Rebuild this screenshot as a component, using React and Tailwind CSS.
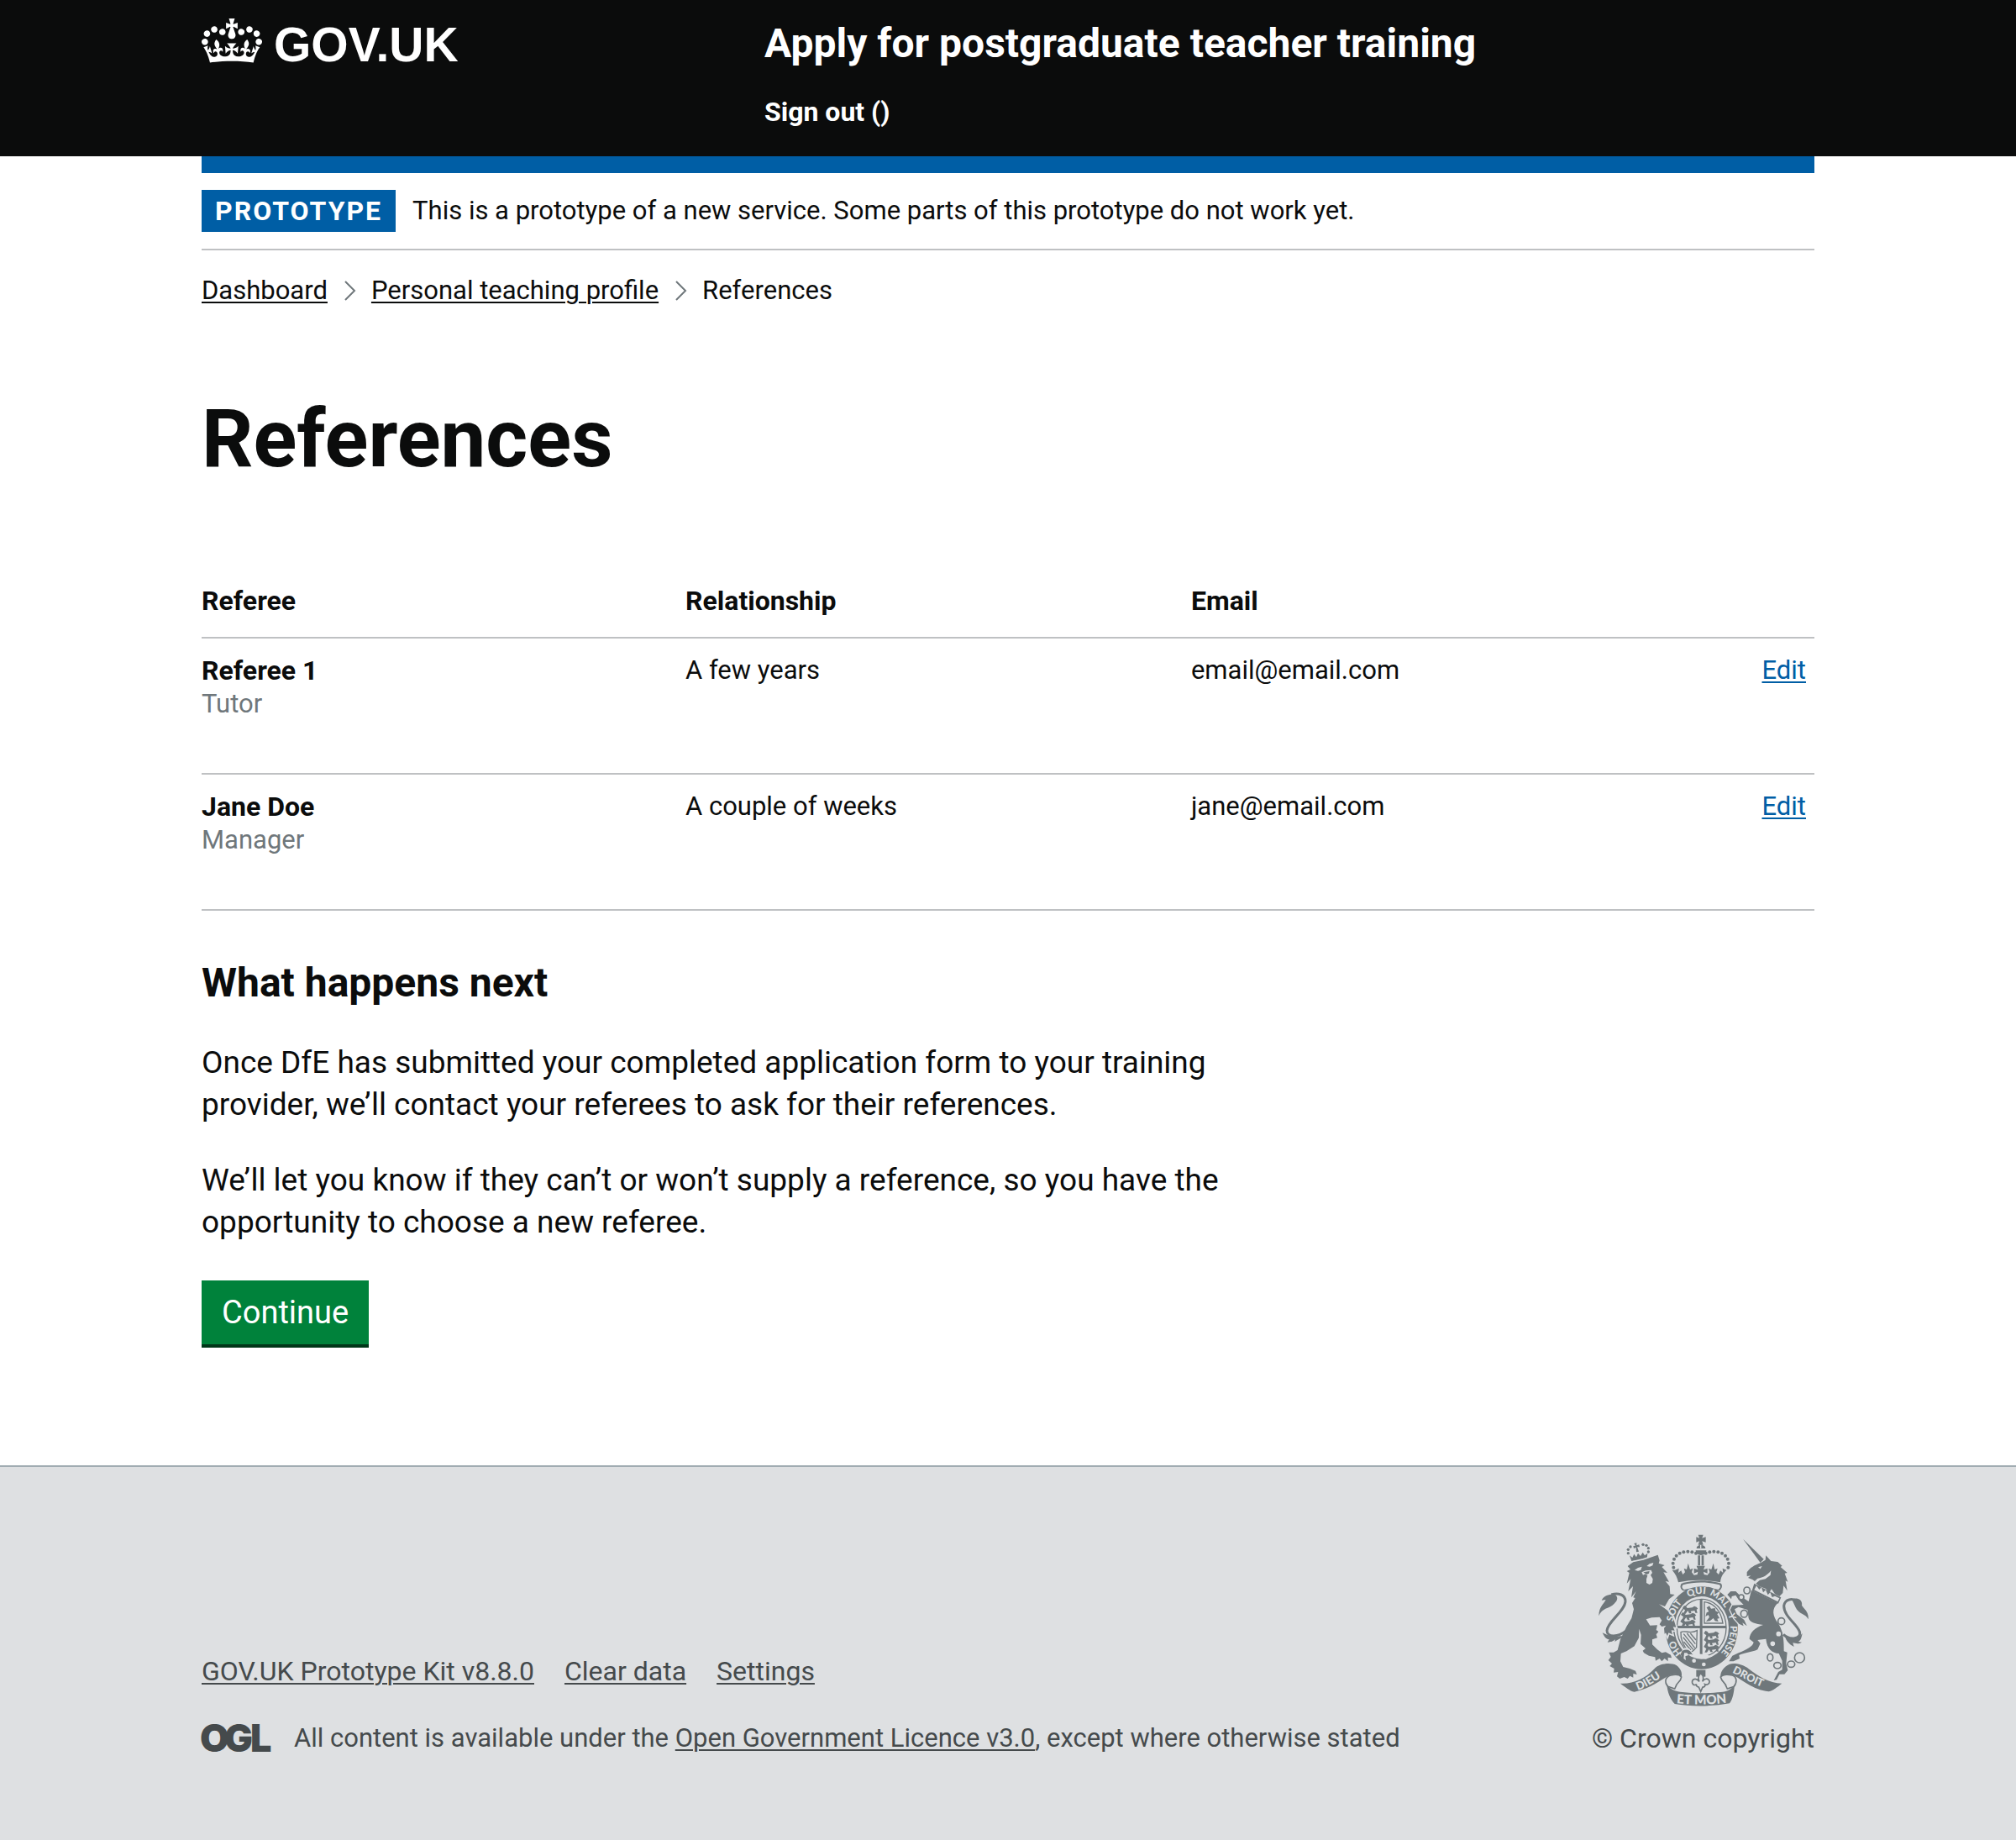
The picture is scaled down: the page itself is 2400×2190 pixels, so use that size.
import React from "react";

const INK = "#6f777b";
const PAPER = "#dee0e2";

function GovCrown() {
  return (
    <svg viewBox="0 0 132 97" className="h-[53px] w-[72px] shrink-0" fill="currentColor" aria-hidden="true">
      <path
        fillRule="evenodd"
        d="M25 30.2c3.5 1.5 7.7-.2 9.1-3.7 1.5-3.6-.2-7.8-3.9-9.2-3.6-1.4-7.6.3-9.1 3.9-1.4 3.5.3 7.5 3.9 9zM9 39.5c3.6 1.5 7.8-.2 9.2-3.7 1.5-3.6-.2-7.8-3.9-9.1-3.6-1.5-7.6.2-9.1 3.8-1.4 3.5.3 7.5 3.8 9zM4.4 57.2c3.5 1.5 7.7-.2 9.1-3.8 1.5-3.6-.2-7.7-3.9-9.1-3.5-1.5-7.6.3-9.1 3.8-1.4 3.5.3 7.6 3.9 9.1zm38.3-21.4c3.5 1.5 7.7-.2 9.1-3.8 1.5-3.6-.2-7.7-3.9-9.1-3.6-1.5-7.6.3-9.1 3.8-1.3 3.6.4 7.7 3.9 9.1zm64.4-5.6c-3.6 1.5-7.8-.2-9.1-3.7-1.5-3.6.2-7.8 3.8-9.2 3.6-1.4 7.7.3 9.2 3.9 1.3 3.5-.4 7.5-3.9 9zm15.9 9.3c-3.6 1.5-7.7-.2-9.1-3.7-1.5-3.6.2-7.8 3.7-9.1 3.6-1.5 7.7.2 9.2 3.8 1.5 3.5-.3 7.5-3.8 9zm4.7 17.7c-3.6 1.5-7.8-.2-9.2-3.8-1.5-3.6.2-7.7 3.9-9.1 3.6-1.5 7.7.3 9.2 3.8 1.3 3.5-.4 7.6-3.9 9.1zM89.3 35.8c-3.6 1.5-7.8-.2-9.2-3.8-1.4-3.6.2-7.7 3.9-9.1 3.6-1.5 7.7.3 9.2 3.8 1.4 3.6-.3 7.7-3.9 9.1zM69.7 17.7l8.9 4.7V9.3l-8.9 2.8c-.2-.3-.5-.6-.9-.9L72.4 0H59.6l3.5 11.2c-.3.3-.6.5-.9.9l-8.8-2.8v13.1l8.8-4.7c.3.3.6.7.9.9l-5 15.4v.1c-.2.8-.4 1.6-.4 2.4 0 4.1 3.1 7.5 7 8.1h.2c.3 0 .7.1 1 .1.4 0 .7 0 1-.1h.2c4-.6 7.1-4.1 7.1-8.1 0-.8-.1-1.7-.4-2.4V34l-5.1-15.4c.4-.2.7-.6 1-.9zM66 92.8c16.9 0 32.8 1.1 47.1 3.2 4-16.9 8.9-26.7 14-33.5l-9.6-3.4c1 4.9 1.1 7.2 0 10.2-1.5-1.4-3-4.3-4.2-8.7L108.6 76c2.8-2 5-3.2 7.5-3.3-4.4 9.4-10 11.9-13.6 11.2-4.3-.8-6.3-4.6-5.6-7.9 1-4.7 5.7-5.9 8-.5 4.3-8.7-3-11.4-7.6-8.8 7.1-7.2 7.9-13.5 2.1-21.1-8 6.1-8.1 12.3-4.5 20.8-4.7-5.4-12.1-2.5-9.5 6.2 3.4-5.2 7.9-2 7.2 3.1-.6 4.3-6.4 7.8-13.5 7.2-10.3-.9-10.9-8-11.2-13.8 2.5-.5 7.1 1.8 11 7.3L80.2 60c-4.1 4.4-8 5.3-12.3 5.4 1.4-4.4 8-11.6 8-11.6H55.5s6.4 7.2 7.9 11.6c-4.2-.1-8-1-12.3-5.4l1.4 16.4c3.9-5.5 8.5-7.7 10.9-7.3-.3 5.8-.9 12.8-11.1 13.8-7.2.6-12.9-2.9-13.5-7.2-.7-5 3.8-8.3 7.1-3.1 2.7-8.7-4.6-11.6-9.4-6.2 3.7-8.5 3.6-14.7-4.6-20.8-5.8 7.6-5 13.9 2.2 21.1-4.7-2.6-11.9.1-7.7 8.8 2.3-5.5 7.1-4.2 8.1.5.7 3.3-1.3 7.1-5.7 7.9-3.5.7-9-1.8-13.5-11.2 2.5.1 4.7 1.3 7.5 3.3l-4.7-15.4c-1.2 4.4-2.7 7.2-4.3 8.7-1.1-3-.9-5.3 0-10.2l-9.5 3.4c5 6.9 9.9 16.7 14 33.5 14.8-2.1 30.8-3.2 47.7-3.2z"
      />
    </svg>
  );
}

function OglLogo() {
  return (
    <svg viewBox="0 0 82 34" className="h-[34px] w-[82px] shrink-0 overflow-visible" role="img" aria-label="Open Government Licence" fill="currentColor">
      <text x="-2 27 58" y="33" fontFamily="Inter, sans-serif" fontWeight="900" fontSize="45">
        OGL
      </text>
    </svg>
  );
}

const crownDots = [
  [420, 144], [406, 140], [391, 138], [376, 140], [362, 144], [350, 153], [342, 165], [338, 180], [340, 195],
];

const lionCrownDots = [
  [178, 144], [178, 131], [186, 121], [231, 113], [243, 116], [250, 126], [250, 139],
];

function Passant({ x, y }) {
  return <path d={`M${x} ${y}l6-9 7 3 4 6 18-2 7-5 8 3 5 6-5 3 3 12h-7l-3-8-14 2 3 8h-8l-5-10-8 11h-8l6-13z`} />;
}

function RoyalArms() {
  return (
    <svg viewBox="72 76 750 615" className="h-[205px] w-[250px]" fill={INK} role="img" aria-label="Royal coat of arms">
      <defs>
        <path id="garter" d="M440 531A103 121 0 0 1 440 289A103 121 0 0 1 440 531" />
        <path id="dieu" d="M212 633C250 622 280 596 330 566" />
        <path id="droit" d="M549 570C590 588 630 618 690 632" />
        <path id="etmon" d="M350 680Q438 688 530 678" />
      </defs>

      {/* garter */}
      <ellipse cx="440" cy="410" rx="130" ry="148" />
      <ellipse cx="440" cy="410" rx="97" ry="112" fill={PAPER} />

      {/* shield */}
      <ellipse cx="440" cy="410" rx="88" ry="102" fill="none" stroke={INK} strokeWidth="4" />
      <path d="M434 310h9v202h-9zM352 403h176v9H352z" />
      <Passant x={372} y={340} />
      <Passant x={366} y={364} />
      <Passant x={364} y={388} />
      <Passant x={448} y={430} />
      <Passant x={448} y={454} />
      <Passant x={448} y={478} />
      <path fill="none" stroke={INK} strokeWidth="4" d="M450 318C486 322 510 352 516 394H450z" />
      <path d="M458 338l10-6 6 10 14-2 2 10 12 6-6 6 8 14-8 2 4 10-12-2-6-10-12 10-14 2 12-16-4-8-10 6 4-14 8-4z" />
      <path fill="none" stroke={INK} strokeWidth="4" d="M366 426C382 418 402 434 424 420L422 480C408 498 402 496 398 500C380 482 364 456 366 426z" />
      <path fill="none" stroke={INK} strokeWidth="4" d="M376 432L416 482M388 430L418 468M400 430L420 454M374 444L410 488M376 460L402 490" />

      {/* buckle */}
      <path fill={PAPER} d="M362 500L372 522 384 514 402 498 412 512 456 522 470 514 462 506 410 502 396 484 380 482z" />
      <path d="M372 492c14-8 30-2 34 12l-12 2-2 14-10 2 2 14c-16 2-24-14-16-24-4-8-2-16 4-20z" />
      <path fill={PAPER} d="M378 500l10 0 6 8-12 4 2 14-8-6z" />
      <circle cx="413" cy="528" r="7" fill={PAPER} />
      <circle cx="448" cy="541" r="7" fill={PAPER} />

      {/* lion's crown */}
      <path d="M190 172l-7-20 10 8 6-13 8 11 6-14 9 10 8-13 7 11 10-8-2 22-26 3z" />
      <path d="M199 109l9-2 0 9 9-3 2 9-9 0 6 16-9 2-1-17-8 4-2-9 8-1z" />
      {lionCrownDots.map(([x, y]) => (
        <circle key={`${x}-${y}`} cx={x} cy={y} r="5" />
      ))}

      {/* lion */}
      <path
        stroke={PAPER}
        strokeWidth="10"
        paintOrder="stroke"
        d="M176 190L196 176 232 168 262 158 284 150 290 170 287 180 308 187 298 193 318 214 304 212 324 246 311 244 326 262 328 290 344 292 324 308 309 334 288 326 318 348 338 372 349 408 338 407 344 420 332 419 336 434 322 428 318 440 312 428 308 432 306 412 313 402 298 406 290 398 298 384 290 372 262 374 242 380 256 402 282 401 278 418 286 424 278 434 282 446 264 452 264 470 282 488 298 500 312 497 330 507 333 518 320 516 320 530 308 520 298 530 290 520 276 528 274 515 252 510 234 500 230 492 240 484 222 468 224 436 217 414 216 446 200 476 172 494 152 502 150 530 160 550 184 556 204 564 209 577 196 574 196 588 184 582 176 592 164 586 148 592 138 584 142 568 126 570 128 556 112 547 120 538 107 526 116 514 109 498 126 498 140 490 150 452 172 406 190 376 198 344 192 322 203 304 196 302 206 280 189 302 195 262 178 280 187 236 173 252 182 214 173 208 186 202z"
      />
      <path fill={PAPER} d="M201 204l12-8 14-4-4 12-10 3zM244 190l10-8 14-4-3 10-10 4zM226 212l14-6 20-2 4 10-6 8 8 14-2 14-10 6-11-6 0-14 4-12-8-6-8 4z" />
      <path d="M232 212l22-4-2 8-8 4z" />
      <path fill="none" stroke={INK} strokeWidth="9" d="M172 420C140 446 102 444 102 420C104 388 166 352 168 316C168 292 142 284 118 292" />
      <path d="M73 368C74 334 88 330 98 310L83 312C90 296 112 288 130 292C144 300 140 314 128 324C112 342 84 338 73 368zM86 428L104 436C126 446 140 438 162 440C152 450 140 452 130 460L132 452C120 462 116 460 104 462L110 452C96 450 92 440 86 428z" />

      {/* unicorn */}
      <path d="M588 93L662 165 650 178z" />
      <path d="M602 212C612 196 630 186 652 178L668 168 670 152 688 172 712 175 728 189 722 193 746 214 737 216 748 246 740 242 746 278 733 260 730 286 718 298 702 290 690 272 682 284 668 270 646 262 634 252 648 240 668 236 686 222 688 206C676 222 660 232 640 234L630 244 622 238 606 232 616 224 602 226z" />
      <path fill={PAPER} d="M642 194l14-4-6 10z" />
      <path
        stroke={PAPER}
        strokeWidth="8"
        paintOrder="stroke"
        d="M618 276L712 322C690 344 692 366 716 398C734 430 734 462 734 494L746 498 742 538 748 562 736 576 718 576 708 596 698 598 714 568 728 560 728 528 716 502C692 500 674 486 670 450L640 454 650 466 640 488C620 498 590 500 574 508L576 520 554 530 538 530 550 510 572 500C600 488 622 478 626 462L611 450C612 428 630 410 660 400C634 396 612 392 608 376L604 346 572 336 558 344 566 362 592 382 602 404 586 392 590 404 574 396 556 376 542 346 550 330 590 328 572 310 562 294 548 298 546 308 532 292 544 280 562 280 580 298 608 316z"
      />
      <path d="M628 252L724 302 714 324 620 278z" />
      <path fill={PAPER} d="M636 260l10 14 8-8 6 18 9-9 8 18 8-9 7 17 10-4 16 8-6 12-84-42z" />
      <path fill="none" stroke={INK} strokeWidth="9" d="M732 434C756 456 798 450 790 424C780 396 734 370 734 332C738 306 764 304 784 316" />
      <path d="M762 308C784 300 802 312 798 330C806 344 824 352 821 380C812 360 786 362 776 338zM738 440C760 456 784 452 800 430C796 448 796 452 786 460L798 462C786 470 776 466 766 464L770 478C754 470 742 458 738 440z" />
      <g fill={PAPER} stroke={INK} strokeWidth="5">
        <ellipse cx="602" cy="277" rx="11" ry="12" />
        <ellipse cx="582" cy="301" rx="9" ry="9" />
        <ellipse cx="592" cy="360" rx="12" ry="13" />
        <ellipse cx="725" cy="387" rx="12" ry="12" />
        <ellipse cx="715" cy="432" rx="11" ry="11" />
        <ellipse cx="694" cy="467" rx="11" ry="11" />
        <ellipse cx="685" cy="516" rx="10" ry="13" />
        <ellipse cx="711" cy="545" rx="13" ry="11" />
        <ellipse cx="760" cy="540" rx="13" ry="11" />
        <circle cx="790" cy="517" r="18" />
      </g>

      {/* imperial crown */}
      <path d="M428 78h18l-4 12 13-4v19l-13-4 4 13h-18l4-13-11 4V86l11 4zM422 127c0-8 7-12 13-13v14h4v-14c8 1 15 5 15 13zM419 134h38c0 10-8 17-19 17s-19-7-19-17z" />
      <path d="M427 152h8v36h-8zM440 152h8v36h-8z" />
      {crownDots.map(([x, y]) => (
        <React.Fragment key={x}>
          <circle cx={x} cy={y} r="6" />
          <circle cx={875 - x} cy={y} r="6" />
        </React.Fragment>
      ))}
      <path d="M345 204l14-6-2 16 10-8 6 14 8-8-4-14 10 4 5-22 7 22 10-4-4 14 8 10 12-2 2-10-14 6v-18l14 5-5-14h30l-5 14 14-5v18l-14-6 2 10 12 2 8-10-4-14 10 4 7-22 5 22 10-4-4 14 8 8 6-14 10 8-2-16 14 6c-14 14-20 26-22 44-50-10-100-10-150 0-4-18-10-30-22-44z" />
      <path d="M368 252C412 238 464 238 510 252C516 262 512 270 504 278H374C364 272 362 262 368 252z" />
      <path fill={PAPER} d="M374 257C414 246 462 246 504 257C510 263 506 268 500 274L484 270C456 260 424 260 396 270L378 274C370 270 368 262 374 257z" />

      {/* pendant */}
      <path d="M421 561h33v24h-33z" />
      <path fill={PAPER} stroke={INK} strokeWidth="5" d="M437 572C426 584 428 594 432 602C420 588 404 592 407 608C410 618 420 614 422 612C420 618 426 622 430 622L437 638 444 622C450 622 454 618 452 612C460 616 470 610 468 600C462 588 450 592 443 602C448 592 448 582 437 572z" />

      {/* motto ribbon */}
      <path d="M150 609C196 612 240 590 270 558C290 536 330 534 350 544C366 556 372 572 368 586C356 572 340 576 326 580C292 596 262 626 200 639C184 636 168 622 150 609z" />
      <path d="M727 609C680 608 642 582 610 558C584 538 556 536 540 540C520 548 506 568 508 586C520 574 540 576 552 580C586 594 622 632 680 638C696 634 710 622 727 609z" />
      <path fill={PAPER} stroke={INK} strokeWidth="5" d="M368 586C366 604 350 606 348 620L344 628 320 620C306 604 310 586 330 580C346 576 362 578 368 586z" />
      <path fill={PAPER} stroke={INK} strokeWidth="5" d="M508 586C512 604 526 606 528 620L532 628 556 620C568 604 566 586 550 580C532 576 516 576 508 586z" />
      <path d="M316 612C326 630 350 638 372 640C416 646 470 644 508 640C530 638 548 630 558 612C556 640 552 664 540 680C480 692 400 692 344 682C328 664 318 640 316 612z" />

      <g fill={PAPER} fontFamily="Lato, sans-serif" fontWeight="900">
        <g fontSize="34">
          <text><textPath href="#garter" startOffset="11%">HO</textPath></text>
          <text><textPath href="#garter" startOffset="28%">SOIT</textPath></text>
          <text><textPath href="#garter" startOffset="43%">QUI</textPath></text>
          <text><textPath href="#garter" startOffset="54%">MAL</textPath></text>
          <text><textPath href="#garter" startOffset="68%">Y</textPath></text>
          <text><textPath href="#garter" startOffset="74%">PENSE</textPath></text>
        </g>
        <text fontSize="40"><textPath href="#dieu">DIEU</textPath></text>
        <text fontSize="38"><textPath href="#droit">DROIT</textPath></text>
        <text fontSize="46"><textPath href="#etmon">ET MON</textPath></text>
      </g>
    </svg>
  );
}

function Chevron() {
  return (
    <svg viewBox="0 0 14 24" className="h-6 w-[14px] shrink-0" fill="none" stroke={INK} strokeWidth="2" aria-hidden="true">
      <path d="M1 1l11 11L1 23" />
    </svg>
  );
}

const textLink = "underline decoration-2 underline-offset-[3px]";

const referees = [
  { name: "Referee 1", role: "Tutor", relationship: "A few years", email: "email@email.com" },
  { name: "Jane Doe", role: "Manager", relationship: "A couple of weeks", email: "jane@email.com" },
];

const container = "mx-auto w-full max-w-[1920px]";

export default function App() {
  return (
    <div className="flex min-h-screen flex-col bg-white font-['Roboto',sans-serif] text-[31px] leading-10 text-[#0b0c0c]">
      <header className="bg-[#0b0c0c] text-white">
        <div className={`${container} grid grid-cols-[1fr_2fr] gap-x-[45px] pt-[22px] pb-[33px]`}>
          <a href="#home" className="flex items-start gap-[14px] self-start">
            <GovCrown />
            <span className="font-['Liberation_Sans',sans-serif] text-[57px] leading-[62px] font-bold">GOV.UK</span>
          </a>
          <div>
            <a href="#service" className="block text-[48px] leading-[60px] font-bold">
              Apply for postgraduate teacher training
            </a>
            <nav className="mt-[31px]">
              <a href="#sign-out" className="block text-[32px] leading-10 font-bold">
                Sign out ()
              </a>
            </nav>
          </div>
        </div>
      </header>

      <div className={container}>
        <div className="h-5 bg-[#005ea5]" />
        <div className="flex items-center gap-5 border-b-2 border-[#bfc1c3] py-5">
          <strong className="bg-[#005ea5] px-4 py-[5px] text-[32px] leading-10 tracking-[2px] text-white">PROTOTYPE</strong>
          <span>This is a prototype of a new service. Some parts of this prototype do not work yet.</span>
        </div>

        <nav aria-label="Breadcrumb" className="pt-7">
          <ol className="flex items-center gap-5">
            <li><a href="#dashboard" className={textLink}>Dashboard</a></li>
            <li className="flex items-center gap-[18px]">
              <Chevron />
              <a href="#profile" className={textLink}>Personal teaching profile</a>
            </li>
            <li className="flex items-center gap-[18px]">
              <Chevron />
              <span aria-current="page">References</span>
            </li>
          </ol>
        </nav>

        <main className="pt-[104px] pb-36">
          <h1 className="text-[96px] leading-[104px] font-bold">References</h1>

          <table className="mt-[101px] w-full table-fixed border-collapse text-left">
            <thead>
              <tr className="border-b-2 border-[#bfc1c3] align-top text-[32px]">
                <th scope="col" className="w-[30%] pt-5 pb-[23px]">Referee</th>
                <th scope="col" className="w-[31.35%] pt-5 pb-[23px]">Relationship</th>
                <th scope="col" className="pt-5 pb-[23px]">Email</th>
                <td className="w-[10%]" />
              </tr>
            </thead>
            <tbody>
              {referees.map((r) => (
                <tr key={r.email} className="border-b-2 border-[#bfc1c3] align-top">
                  <td className="pt-[18px] pb-[62px]">
                    <strong className="block text-[32px]">{r.name}</strong>
                    <span className="block text-[#6f777b]">{r.role}</span>
                  </td>
                  <td className="pt-[18px]">{r.relationship}</td>
                  <td className="pt-[18px]">{r.email}</td>
                  <td className="pt-[18px] pr-[10px] text-right">
                    <a href="#edit" aria-label={`Edit ${r.name}`} className={`text-[#005ea5] ${textLink}`}>Edit</a>
                  </td>
                </tr>
              ))}
            </tbody>
          </table>

          <section className="mt-14 max-w-[1260px]">
            <h2 className="text-[48px] leading-[60px] font-bold">What happens next</h2>
            <div className="mt-10 space-y-10 text-[37px] leading-[50px]">
              <p>Once DfE has submitted your completed application form to your training provider, we’ll contact your referees to ask for their references.</p>
              <p>We’ll let you know if they can’t or won’t supply a reference, so you have the opportunity to choose a new referee.</p>
            </div>
            <button type="button" className="mt-11 block bg-[#00823b] px-6 py-[14px] text-[38px] leading-[48px] text-white shadow-[0_4px_0_#003618]">
              Continue
            </button>
          </section>
        </main>
      </div>

      <footer className="grow border-t-2 border-[#a1acb2] bg-[#dee0e2] pt-20 pb-[60px] text-[#454a4c]">
        <div className={`${container} flex items-end justify-between`}>
          <div>
            <ul className="flex gap-9 text-[32px]">
              <li><a href="#kit" className={textLink}>GOV.UK Prototype Kit v8.8.0</a></li>
              <li><a href="#clear" className={textLink}>Clear data</a></li>
              <li><a href="#settings" className={textLink}>Settings</a></li>
            </ul>
            <div className="mt-10 flex items-center gap-7">
              <OglLogo />
              <span>
                All content is available under the <a href="#ogl" className={textLink}>Open Government Licence v3.0</a>, except where otherwise stated
              </span>
            </div>
          </div>
          <a href="#copyright" className="flex flex-col items-center gap-[18px] text-[32px]">
            <RoyalArms />
            <span>© Crown copyright</span>
          </a>
        </div>
      </footer>
    </div>
  );
}
